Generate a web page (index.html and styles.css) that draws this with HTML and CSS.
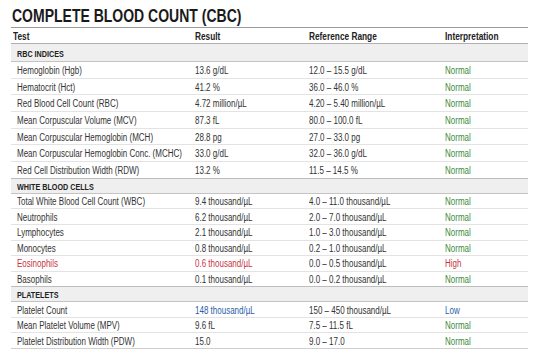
FILE: index.html
```html
<!DOCTYPE html>
<html lang="en">
<head>
<meta charset="utf-8">
<title>Complete Blood Count (CBC)</title>
<link rel="stylesheet" href="styles.css">
</head>
<body>
<main class="report">
  <h1 class="title">COMPLETE BLOOD COUNT (CBC)</h1>
  <div class="table">
    <div class="row head">
      <div class="cell first">Test</div>
      <div class="cell">Result</div>
      <div class="cell">Reference Range</div>
      <div class="cell">Interpretation</div>
    </div>

    <div class="row section sec-rbc"><div class="cell">RBC INDICES</div></div>
    <div class="group rbc">
      <div class="row"><div class="cell">Hemoglobin (Hgb)</div><div class="cell">13.6 g/dL</div><div class="cell">12.0 – 15.5 g/dL</div><div class="cell ok">Normal</div></div>
      <div class="row"><div class="cell">Hematocrit (Hct)</div><div class="cell">41.2 %</div><div class="cell">36.0 – 46.0 %</div><div class="cell ok">Normal</div></div>
      <div class="row"><div class="cell">Red Blood Cell Count (RBC)</div><div class="cell">4.72 million/µL</div><div class="cell">4.20 – 5.40 million/µL</div><div class="cell ok">Normal</div></div>
      <div class="row"><div class="cell">Mean Corpuscular Volume (MCV)</div><div class="cell">87.3 fL</div><div class="cell">80.0 – 100.0 fL</div><div class="cell ok">Normal</div></div>
      <div class="row"><div class="cell">Mean Corpuscular Hemoglobin (MCH)</div><div class="cell">28.8 pg</div><div class="cell">27.0 – 33.0 pg</div><div class="cell ok">Normal</div></div>
      <div class="row"><div class="cell">Mean Corpuscular Hemoglobin Conc. (MCHC)</div><div class="cell">33.0 g/dL</div><div class="cell">32.0 – 36.0 g/dL</div><div class="cell ok">Normal</div></div>
      <div class="row"><div class="cell">Red Cell Distribution Width (RDW)</div><div class="cell">13.2 %</div><div class="cell">11.5 – 14.5 %</div><div class="cell ok">Normal</div></div>
    </div>

    <div class="row section"><div class="cell">WHITE BLOOD CELLS</div></div>
    <div class="group wbc">
      <div class="row"><div class="cell">Total White Blood Cell Count (WBC)</div><div class="cell">9.4 thousand/µL</div><div class="cell">4.0 – 11.0 thousand/µL</div><div class="cell ok">Normal</div></div>
      <div class="row"><div class="cell">Neutrophils</div><div class="cell">6.2 thousand/µL</div><div class="cell">2.0 – 7.0 thousand/µL</div><div class="cell ok">Normal</div></div>
      <div class="row"><div class="cell">Lymphocytes</div><div class="cell">2.1 thousand/µL</div><div class="cell">1.0 – 3.0 thousand/µL</div><div class="cell ok">Normal</div></div>
      <div class="row"><div class="cell">Monocytes</div><div class="cell">0.8 thousand/µL</div><div class="cell">0.2 – 1.0 thousand/µL</div><div class="cell ok">Normal</div></div>
      <div class="row"><div class="cell high">Eosinophils</div><div class="cell high">0.6 thousand/µL</div><div class="cell">0.0 – 0.5 thousand/µL</div><div class="cell high">High</div></div>
      <div class="row"><div class="cell">Basophils</div><div class="cell">0.1 thousand/µL</div><div class="cell">0.0 – 0.2 thousand/µL</div><div class="cell ok">Normal</div></div>
    </div>

    <div class="row section"><div class="cell">PLATELETS</div></div>
    <div class="group plt">
      <div class="row"><div class="cell">Platelet Count</div><div class="cell low">148 thousand/µL</div><div class="cell">150 – 450 thousand/µL</div><div class="cell low">Low</div></div>
      <div class="row"><div class="cell">Mean Platelet Volume (MPV)</div><div class="cell">9.6 fL</div><div class="cell">7.5 – 11.5 fL</div><div class="cell ok">Normal</div></div>
      <div class="row last"><div class="cell">Platelet Distribution Width (PDW)</div><div class="cell">15.0</div><div class="cell">9.0 – 17.0</div><div class="cell ok">Normal</div></div>
    </div>
  </div>
</main>
</body>
</html>
```

FILE: styles.css
```css
html, body {
  margin: 0;
  padding: 0;
  background: #ffffff;
}

body {
  font-family: "Liberation Sans", Arial, sans-serif;
  color: #333333;
  font-size: 10px;
}

.report {
  padding: 6px 12px 0 11px;
}

/* the report typeface is a condensed grotesque: narrow the glyphs */
.title {
  margin: 0 0 1px 1px;
  font-size: 17.5px;
  line-height: 20px;
  font-weight: bold;
  color: #1a1a1a;
  white-space: nowrap;
  transform: scaleX(0.8);
  transform-origin: left center;
}

.table {
  display: flex;
  flex-direction: column;
}

.row {
  display: grid;
  grid-template-columns: 178px 114px 136px 89px;
  align-items: center;
  box-sizing: border-box;
  border-bottom: 1px solid #e3e3e3;
}

.cell {
  padding: 2px 0 0 6px;
  white-space: nowrap;
  line-height: 12px;
  transform: scaleX(0.8);
  transform-origin: 6px center;
}

.head {
  height: 17px;
  border-top: 1px solid #9a9a9a;
  border-bottom: 1px solid #b0b0b0;
  font-weight: bold;
  color: #222222;
}

.head .cell {
  padding-top: 3px;
  transform: scaleX(0.83);
}

.head .first {
  padding-left: 2px;
  transform-origin: 2px center;
}

.section {
  display: flex;
  height: 15px;
  background: #efefef;
  border-bottom: 1px solid #c4c4c4;
  font-weight: bold;
  font-size: 9px;
  color: #222222;
}

.sec-rbc {
  height: 18px;
}

.group .row {
  height: 15.6px;
}

.rbc .row {
  height: 16.7px;
}

.plt .row {
  height: 15.5px;
}

.group .row:last-child {
  border-bottom: 1px solid #bdbdbd;
}

.group .row.last {
  border-bottom: 1px solid #cfcfcf;
}

.ok {
  color: #3d8a3d;
}

.high {
  color: #c8343f;
}

.low {
  color: #2b5ea8;
}
```
